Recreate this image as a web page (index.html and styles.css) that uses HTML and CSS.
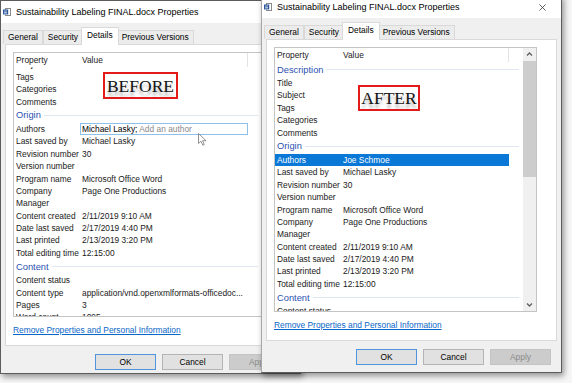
FILE: index.html
```html
<!DOCTYPE html>
<html lang="en">
<head>
    <meta charset="UTF-8">
    <title>Sustainability Labeling FINAL.docx Properties - Before / After</title>
    <link rel="stylesheet" href="styles.css">
</head>
<body>
<div class="desk">

    <!-- BEFORE dialog -->
    <div class="dialog dialog-before">
        <div class="titlebar">
            <svg class="doc-icon" viewBox="0 0 8 8"><rect x="2.5" y="0.5" width="5" height="7" fill="#fff" stroke="#8a8a8a"/><rect x="0" y="1.5" width="5.2" height="5" fill="#2b579a"/><path d="M1 3h3M1 4.5h3M1 6h3" stroke="#fff" stroke-width="0.6"/></svg>
            <span class="title">Sustainability Labeling FINAL.docx Properties</span>
            <svg class="close" viewBox="0 0 8 8"><path d="M0.5 0.5L7.5 7.5M7.5 0.5L0.5 7.5" stroke="#333" stroke-width="0.9"/></svg>
        </div>
        <div class="tabs">
            <span class="tab">General</span>
            <span class="tab">Security</span>
            <span class="tab active">Details</span>
            <span class="tab">Previous Versions</span>
        </div>
        <div class="page">
            <div class="listview">
                <div class="lv-main">
                    <div class="lv-header"><span class="h-prop">Property</span><span class="h-val">Value</span></div>
                    <div class="lv-body">
                        <div class="lv-items scrolled">
                            <div class="group">Description</div>
                            <div class="row"><span class="name">Title</span><span class="val"></span></div>
                            <div class="row"><span class="name">Subject</span><span class="val"></span></div>
                            <div class="row"><span class="name">Tags</span><span class="val"></span></div>
                            <div class="row"><span class="name">Categories</span><span class="val"></span></div>
                            <div class="row"><span class="name">Comments</span><span class="val"></span></div>
                            <div class="group">Origin</div>
                            <div class="row"><span class="name">Authors</span><span class="val edit">Michael Lasky; <span class="hint">Add an author</span></span></div>
                            <div class="row"><span class="name">Last saved by</span><span class="val">Michael Lasky</span></div>
                            <div class="row"><span class="name">Revision number</span><span class="val">30</span></div>
                            <div class="row"><span class="name">Version number</span><span class="val"></span></div>
                            <div class="row"><span class="name">Program name</span><span class="val">Microsoft Office Word</span></div>
                            <div class="row"><span class="name">Company</span><span class="val">Page One Productions</span></div>
                            <div class="row"><span class="name">Manager</span><span class="val"></span></div>
                            <div class="row"><span class="name">Content created</span><span class="val">2/11/2019 9:10 AM</span></div>
                            <div class="row"><span class="name">Date last saved</span><span class="val">2/17/2019 4:40 PM</span></div>
                            <div class="row"><span class="name">Last printed</span><span class="val">2/13/2019 3:20 PM</span></div>
                            <div class="row"><span class="name">Total editing time</span><span class="val">12:15:00</span></div>
                            <div class="group">Content</div>
                            <div class="row"><span class="name">Content status</span><span class="val"></span></div>
                            <div class="row"><span class="name">Content type</span><span class="val">application/vnd.openxmlformats-officedoc...</span></div>
                            <div class="row"><span class="name">Pages</span><span class="val">3</span></div>
                            <div class="row"><span class="name">Word count</span><span class="val">1095</span></div>
                        </div>
                    </div>
                </div>
                <div class="scrollbar">
                    <span class="sb-arrow"><svg viewBox="0 0 13 13"><path d="M4 7.5L6.5 5L9 7.5" stroke="#606060" stroke-width="1.3" fill="none"/></svg></span>
                    <span class="sb-track"><span class="sb-thumb thumb-low"></span></span>
                    <span class="sb-arrow"><svg viewBox="0 0 13 13"><path d="M4 5.5L6.5 8L9 5.5" stroke="#606060" stroke-width="1.3" fill="none"/></svg></span>
                </div>
            </div>
            <a class="remove-link" href="#">Remove Properties and Personal Information</a>
        </div>
        <div class="buttons">
            <button class="btn default">OK</button>
            <button class="btn">Cancel</button>
            <button class="btn" disabled>Apply</button>
        </div>

        <div class="stamp stamp-before">BEFORE</div>
        <svg class="cursor" viewBox="0 0 9 13"><path d="M0.5 0.5V10.5L3 8.2L4.8 12.2L6.3 11.5L4.6 7.7H8Z" fill="#fff" stroke="#777" stroke-width="0.8" stroke-linejoin="round"/></svg>
    </div>

    <!-- AFTER dialog -->
    <div class="dialog dialog-after">
        <div class="titlebar">
            <svg class="doc-icon" viewBox="0 0 8 8"><rect x="2.5" y="0.5" width="5" height="7" fill="#fff" stroke="#8a8a8a"/><rect x="0" y="1.5" width="5.2" height="5" fill="#2b579a"/><path d="M1 3h3M1 4.5h3M1 6h3" stroke="#fff" stroke-width="0.6"/></svg>
            <span class="title">Sustainability Labeling FINAL.docx Properties</span>
            <svg class="close" viewBox="0 0 8 8"><path d="M0.5 0.5L7.5 7.5M7.5 0.5L0.5 7.5" stroke="#333" stroke-width="0.9"/></svg>
        </div>
        <div class="tabs">
            <span class="tab">General</span>
            <span class="tab">Security</span>
            <span class="tab active">Details</span>
            <span class="tab">Previous Versions</span>
        </div>
        <div class="page">
            <div class="listview">
                <div class="lv-main">
                    <div class="lv-header"><span class="h-prop">Property</span><span class="h-val">Value</span></div>
                    <div class="lv-body">
                        <div class="lv-items">
                            <div class="group">Description</div>
                            <div class="row"><span class="name">Title</span><span class="val"></span></div>
                            <div class="row"><span class="name">Subject</span><span class="val"></span></div>
                            <div class="row"><span class="name">Tags</span><span class="val"></span></div>
                            <div class="row"><span class="name">Categories</span><span class="val"></span></div>
                            <div class="row"><span class="name">Comments</span><span class="val"></span></div>
                            <div class="group">Origin</div>
                            <div class="row selected"><span class="name">Authors</span><span class="val">Joe Schmoe</span></div>
                            <div class="row"><span class="name">Last saved by</span><span class="val">Michael Lasky</span></div>
                            <div class="row"><span class="name">Revision number</span><span class="val">30</span></div>
                            <div class="row"><span class="name">Version number</span><span class="val"></span></div>
                            <div class="row"><span class="name">Program name</span><span class="val">Microsoft Office Word</span></div>
                            <div class="row"><span class="name">Company</span><span class="val">Page One Productions</span></div>
                            <div class="row"><span class="name">Manager</span><span class="val"></span></div>
                            <div class="row"><span class="name">Content created</span><span class="val">2/11/2019 9:10 AM</span></div>
                            <div class="row"><span class="name">Date last saved</span><span class="val">2/17/2019 4:40 PM</span></div>
                            <div class="row"><span class="name">Last printed</span><span class="val">2/13/2019 3:20 PM</span></div>
                            <div class="row"><span class="name">Total editing time</span><span class="val">12:15:00</span></div>
                            <div class="group">Content</div>
                            <div class="row"><span class="name">Content status</span><span class="val"></span></div>
                            <div class="row"><span class="name">Content type</span><span class="val">application/vnd.openxmlformats-officedoc...</span></div>
                        </div>
                    </div>
                </div>
                <div class="scrollbar">
                    <span class="sb-arrow"><svg viewBox="0 0 13 13"><path d="M4 7.5L6.5 5L9 7.5" stroke="#606060" stroke-width="1.3" fill="none"/></svg></span>
                    <span class="sb-track"><span class="sb-thumb"></span></span>
                    <span class="sb-arrow"><svg viewBox="0 0 13 13"><path d="M4 5.5L6.5 8L9 5.5" stroke="#606060" stroke-width="1.3" fill="none"/></svg></span>
                </div>
            </div>
            <a class="remove-link" href="#">Remove Properties and Personal Information</a>
        </div>
        <div class="buttons">
            <button class="btn default">OK</button>
            <button class="btn">Cancel</button>
            <button class="btn" disabled>Apply</button>
        </div>

        <div class="stamp stamp-after">AFTER</div>
    </div>

</div>
</body>
</html>
```

FILE: styles.css
```css
body {
    margin: 0;
    width: 572px;
    height: 383px;
    overflow: hidden;
    background: #f6f6f6;
    font-family: "Liberation Sans", Arial, sans-serif;
    font-size: 8.4px;
    color: #1a1a1a;
}
.desk {
    position: relative;
    width: 572px;
    height: 383px;
}
.dialog {
    position: absolute;
    width: 301px;
    box-sizing: border-box;
    border: 1px solid #5c5c5c;
    background: #f0f0f0;
    box-shadow: 2px 3px 6px rgba(0,0,0,0.4);
    display: flex;
    flex-direction: column;
}
.dialog-before {
    left: 0;
    top: 0;
    height: 374px;
}
.dialog-after {
    left: 261px;
    top: -5px;
    height: 378px;
    border-left-color: #a8a8a8;
}
.titlebar {
    height: 22px;
    flex: none;
    background: #fff;
    display: flex;
    align-items: center;
    padding-left: 2px;
}
.doc-icon {
    width: 8px;
    height: 8px;
    margin-right: 5px;
}
.title {
    font-size: 9px;
    color: #000;
}
.close {
    width: 7px;
    height: 7px;
    margin-left: auto;
    margin-right: 15px;
}
.tabs {
    height: 21px;
    flex: none;
    display: flex;
    align-items: flex-end;
    padding-left: 2px;
}
.tab {
    height: 14px;
    line-height: 13px;
    padding: 0 4px;
    box-sizing: border-box;
    border: 1px solid #d9d9d9;
    border-bottom: 0;
    background: #ececec;
    color: #000;
}
.tab.active {
    position: relative;
    z-index: 1;
    height: 17px;
    line-height: 15px;
    padding: 0 5px;
    margin: 0 -2px;
    background: #fff;
}
.tab.active::after {
    content: '';
    position: absolute;
    left: 0;
    right: 0;
    bottom: -1px;
    height: 1px;
    background: #fff;
}
.page {
    height: 302px;
    flex: none;
    box-sizing: border-box;
    margin: 0 4px;
    padding: 7px 7px 0;
    background: #fff;
    border: 1px solid #d9d9d9;
}
.listview {
    display: flex;
    width: 263px;
    height: 265px;
    box-sizing: border-box;
    border: 1px solid #c4c4c4;
    background: #fff;
}
.lv-main {
    flex: 1;
    overflow: hidden;
    display: flex;
    flex-direction: column;
}
.lv-header {
    height: 14px;
    flex: none;
    display: flex;
    color: #222;
}
.lv-header span {
    line-height: 14px;
    padding-left: 2px;
    box-sizing: border-box;
}
.h-prop { width: 66px; }
.h-val {
    width: 168px;
    border-right: 1px solid #e3e3e3;
}
.lv-body {
    flex: 1;
    overflow: hidden;
}
.lv-items.scrolled {
    margin-top: -36px;
}
.row {
    display: flex;
    width: 234px;
    height: 12.4px;
    line-height: 12.4px;
    white-space: nowrap;
}
.row .name {
    flex: 0 0 66px;
    padding-left: 2px;
    box-sizing: border-box;
}
.row .val {
    flex: 0 0 168px;
    padding-left: 2px;
    box-sizing: border-box;
    overflow: hidden;
}
.row.selected {
    background: #0a78d6;
    color: #fff;
}
.row .edit {
    border: 1px solid #8ec0ec;
    line-height: 10.4px;
    padding-left: 1px;
    color: #000;
}
.hint { color: #8a8a8a; }
.group {
    display: flex;
    align-items: center;
    height: 15px;
    padding-left: 2px;
    margin-right: 4px;
    color: #2c52b0;
    font-size: 9.3px;
}
.group::after {
    content: '';
    flex: 1;
    height: 1px;
    margin-left: 3px;
    background: #dfe6f1;
}
.scrollbar {
    width: 13px;
    flex: none;
    display: flex;
    flex-direction: column;
    background: #f0f0f0;
}
.sb-arrow {
    height: 13px;
    flex: none;
}
.sb-arrow svg {
    display: block;
    width: 13px;
    height: 13px;
}
.sb-track {
    flex: 1;
}
.sb-thumb {
    display: block;
    height: 116px;
    background: #cdcdcd;
}
.thumb-low {
    margin-top: 20px;
}
.remove-link {
    display: block;
    width: max-content;
    margin-top: 7px;
    line-height: 12px;
    color: #0a66c8;
    text-decoration: underline;
}
.buttons {
    display: flex;
    justify-content: flex-end;
    gap: 6px;
    margin-top: 8px;
    padding-right: 10px;
}
.btn {
    width: 61px;
    height: 16px;
    padding: 0;
    font-family: inherit;
    font-size: 8.4px;
    color: #000;
    background: #e1e1e1;
    border: 1px solid #b4b4b4;
}
.btn.default {
    border-color: #4f95dc;
}
.btn:disabled {
    background: #cccccc;
    border-color: #c4c4c4;
    color: #8a8a8a;
}
.stamp {
    position: absolute;
    box-sizing: border-box;
    border: 2px solid #e31b1b;
    background: #fff;
    font-family: "Liberation Serif", "Times New Roman", serif;
    font-size: 17.5px;
    color: #141414;
    text-align: center;
    text-shadow: 0 4px 3px rgba(0,0,0,0.3);
}
.stamp-before {
    left: 102px;
    top: 71px;
    width: 75px;
    height: 27px;
    line-height: 24px;
}
.stamp-after {
    left: 96px;
    top: 89px;
    width: 62px;
    height: 26px;
    line-height: 23px;
}
.cursor {
    position: absolute;
    left: 197px;
    top: 132px;
    width: 9px;
    height: 13px;
}
```
